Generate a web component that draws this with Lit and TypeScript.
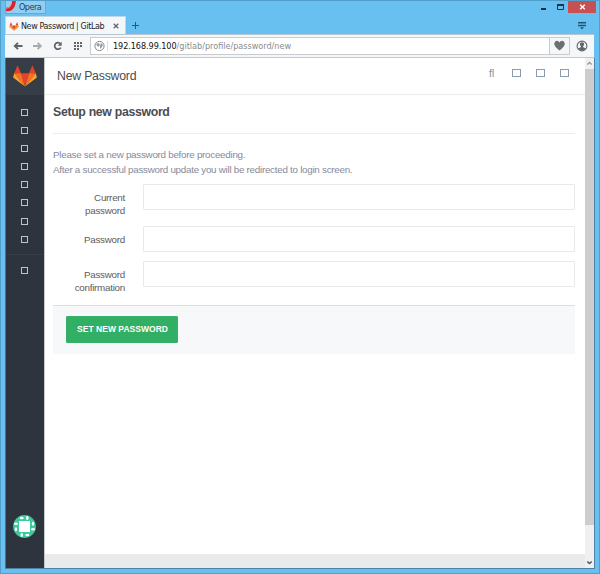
import { LitElement, html, css, svg } from "lit";
import { customElement } from "lit/decorators.js";

const fox = (w: number, h: number) => html`<svg width=${w} height=${h} viewBox="0 0 24 22" style="display:block">
  <path fill="#e24329" d="M4.6 0.2 8 8.3H1.2zM19.4 0.2 22.8 8.3H16z"/>
  <path fill="#e24329" d="M8 8.3h8L12 21.5z"/>
  <path fill="#fc6d26" d="M1.2 8.3H8l4 13.2zM22.8 8.3H16l-4 13.2z"/>
  <path fill="#fca326" d="M1.2 8.3 0.1 12.5 12 21.5zM22.8 8.3l1.1 4.2L12 21.5z"/>
</svg>`;

@customElement("browser-chrome")
class BrowserChrome extends LitElement {
  static styles = css`
    :host { display: block; font-family: "DejaVu Sans Condensed", "DejaVu Sans", sans-serif; color: #333; }
    svg { display: block; flex: none; }
    .title { height: 16px; display: flex; justify-content: space-between; box-sizing: border-box; border-top: 1px solid #4f9fca; padding: 0 4px 0 5px; }
    .opera { width: 41px; height: 13px; box-sizing: border-box; display: flex; gap: 2px; border: 1px solid #66a9cf; border-top: 0; background: #93cef0; overflow: hidden; }
    .opera span { font-size: 9px; line-height: 13px; letter-spacing: -0.5px; color: #1d3f57; }
    .controls { display: flex; height: 13px; }
    .close { width: 28px; height: 12px; background: #c75050; }
    .tabs { height: 18px; display: flex; padding-left: 5px; position: relative; }
    .tab { width: 121px; box-sizing: border-box; height: 18px; background: #f4f7fa; border: 1px solid #b9d8ea; border-bottom: 0; display: flex; align-items: center; padding: 1px 4px 0 3px; }
    .name { font-size: 8.900px; letter-spacing: -0.36px; white-space: nowrap; margin-left: 2px; width: 92px; color: #222; }
    .plus { margin: 6px 0 0 6px; }
    .menu { margin: 6px 14px 0 auto; }
    .bar { height: 24px; box-sizing: border-box; margin: 0 6px 0 5px; background: #f4f6f8; border-top: 1px solid #b7c6d0; border-bottom: 1px solid #c5c8cb; display: flex; align-items: center; }
    .nav { width: 85px; }
    .url { flex: 1; height: 18px; box-sizing: border-box; border: 1px solid #c9cbcd; background: #fff; display: flex; align-items: center; }
    .sep { width: 1px; height: 10px; background: #ddd; margin: 0 5px 0 1px; }
    .addr { font-size: 9px; color: #8b8b8b; white-space: nowrap; flex: 1; }
    .addr b { font-weight: 400; color: #111; letter-spacing: -0.06px; }
    .heart { width: 20px; height: 16px; box-sizing: border-box; border-left: 1px solid #c9cbcd; background: #f4f6f8; padding: 1px 0 0 4px; }
    .user { margin: 0 6px; }
  `;
  render() {
    return html`
      <div class="title">
        <div class="opera">
          <svg width="11" height="12" viewBox="0 0 11 12"><path d="M0 8Q7 10 8-1" fill="none" stroke="#d8232a" stroke-width="4"/><path d="M0 7Q5 8 6-1" fill="none" stroke="#f79a9b" stroke-width="1"/></svg>
          <span>Opera</span>
        </div>
        <div class="controls">
          <svg width="28" height="12" viewBox="0 0 28 12"><path d="M1 7h5v2H1z" fill="#1b2d38"/><path d="M17.500 4h6v4.500h-6z" fill="none" stroke="#1e3442"/><path d="M17 3h7v2h-7z" fill="#1e3442"/></svg>
          <svg class="close" viewBox="0 0 28 12"><path d="M12.200 3.700l4.600 4.600m0-4.600l-4.600 4.600" stroke="#fff" stroke-width="1.400"/></svg>
        </div>
      </div>
      <div class="tabs">
        <div class="tab">${fox(10, 9)}<span class="name">New Password | GitLab</span>
          <svg width="6" height="6" viewBox="0 0 6 6"><path d="M.7.7l4.600 4.600m0-4.600L.7 5.300" stroke="#666" stroke-width="1.300"/></svg>
        </div>
        <svg class="plus" width="7" height="7" viewBox="0 0 7 7"><path d="M3.500 0v7M0 3.500h7" stroke="#235a7c"/></svg>
        <svg class="menu" width="8" height="8" viewBox="0 0 8 8"><path d="M0 .8h8M0 3.500h8" stroke="#24536f" stroke-width="1.400"/><path d="M2 5.200h4l-2 2.200z" fill="#24536f"/></svg>
      </div>
      <div class="bar">
        <svg class="nav" width="85" height="22" viewBox="0 0 85 22">
          <path d="M17.500 11h-7.500M13 7.800 9.800 11l3.200 3.200" fill="none" stroke="#5f6367" stroke-width="1.900"/>
          <path d="M28 11h7.500M32.600 7.800l3.200 3.200-3.200 3.200" fill="none" stroke="#a8abae" stroke-width="1.900"/>
          <path d="M55.500 8.800a3.300 3.300 0 1 0 .3 3.800" fill="none" stroke="#5f6367" stroke-width="1.700"/><path d="M56.700 6.800v4h-4z" fill="#5f6367"/>
          ${[0, 1, 2].map((r) => [0, 1, 2].map((c) => (r === 2 && c === 2 ? "" : svg`<path fill="#606468" d=${`M${69 + c * 3} ${7 + r * 3}h2v2h-2z`}/>`)))}
        </svg>
        <div class="url">
          <svg width="13" height="12" viewBox="0 0 13 12" style="margin-left:2px"><circle cx="6.500" cy="6" r="4.600" fill="none" stroke="#85898c"/><path d="M3 4l3-1 1 2-2 2zM8 3l2 2-1 2-2 2V6z" fill="#999c9f"/></svg>
          <i class="sep"></i>
          <span class="addr"><b>192.168.99.100</b>/gitlab/profile/password/new</span>
          <svg class="heart" viewBox="0 0 15 15"><path d="M5.500 11.500Q0 7.500.200 4.500.600 1.800 3 1.800 4.800 1.800 5.500 3.500 6.200 1.800 8 1.800q2.400 0 2.800 2.700Q11 7.500 5.500 11.500z" fill="#6d7073"/></svg>
        </div>
        <svg class="user" width="12" height="12" viewBox="0 0 12 12"><circle cx="6" cy="6" r="4.900" fill="none" stroke="#626669" stroke-width="1.100"/><path d="M6 2.300c3 0 2.100 3.200 1 4.400 0 1 2.300.8 2.800 1.800Q6 12.500 2.200 8.500C2.700 7.500 5 7.700 5 6.700 3.900 5.500 3 2.300 6 2.300z" fill="#626669"/></svg>
      </div>`;
  }
}

@customElement("password-page")
class PasswordPage extends LitElement {
  static styles = css`
    :host { display: flex; height: 510px; background: #fff; font-family: "Liberation Sans", Arial, sans-serif; }
    .side { width: 38px; background: #2d343e; display: flex; flex-direction: column; align-items: flex-start; border-right: 1px solid #c5c9cc; flex: none; }
    .logo { width: 38px; height: 37px; box-sizing: border-box; background: #373d47; padding: 7px 0 0 7px; }
    .item { width: 7px; height: 7px; box-sizing: border-box; border: 1px solid #bcc3cb; margin: 0 0 11.100px 15px; }
    .items { padding-top: 14px; display: flex; flex-direction: column; }
    .line { width: 38px; height: 1px; background: #363d48; margin: 0 0 12px; }
    .avatar { margin: auto 0 30px 7px; display: block; }
    .main { flex: 1; min-width: 0; display: flex; flex-direction: column; }
    .head { height: 37px; box-sizing: border-box; border-bottom: 1px solid #ececee; display: flex; align-items: center; padding: 0 16px 0 12px; font-size: 12.300px; letter-spacing: -0.22px; color: #4c4c50; }
    .head .t { flex: 1; }
    .fl { font-size: 10.500px; color: #7f8fa4; width: 23px; margin-top: -6px; }
    .sq { width: 9px; height: 8px; box-sizing: border-box; border: 1px solid #8b9bb2; margin-left: 15px; margin-top: -7px; }
    .sq:nth-of-type(1) { margin-left: 0; }
    .body { padding: 0 10px 0 8px; flex: 1; }
    h3 { margin: 0; height: 39px; box-sizing: border-box; font-size: 12.300px; letter-spacing: -0.32px; line-height: 35px; color: #4c4c50; border-bottom: 1px solid #ececee; }
    p { margin: 13px 0 7px; font-size: 9.800px; letter-spacing: -0.26px; line-height: 15px; color: #858a9b; white-space: nowrap; }
    .row { display: flex; }
    label { width: 72px; margin-right: 18px; text-align: right; font-size: 9.800px; letter-spacing: -0.25px; line-height: 13px; padding-top: 7px; color: #5c5d5e; box-sizing: border-box; }
    .input { flex: 1; height: 26px; box-sizing: border-box; border: 1px solid #e7e9ed; border-radius: 1px; background: #fff; }
    .r1 { height: 42px; } .r2 { height: 35px; } .r3 { height: 44px; }
    .actions { height: 49px; box-sizing: border-box; background: #f7f8fa; border-top: 1px solid #dcdfe2; padding: 10px 0 0 13px; }
    button { display: block; width: 112px; height: 27px; padding: 0 0 1px 1px; border: 1px solid #3aaf69; border-radius: 1px; background: #31af64; color: #fff; font: bold 8.500px "Liberation Sans", Arial, sans-serif; letter-spacing: 0.030px; white-space: nowrap; }
    .foot { height: 14px; background: #e9eaeb; }
    .scroll { width: 9px; flex: none; background: #f0f0f0; display: flex; flex-direction: column; }
    .scroll svg { display: block; }
    .thumb { height: 456px; background: #cdcdcd; }
    .down { margin-top: auto; }
  `;
  render() {
    const quarters = [0, 90, 180, 270];
    return html`
      <div class="side">
        <div class="logo">${fox(24, 22)}</div>
        <div class="items">${Array.from({ length: 8 }, () => html`<i class="item"></i>`)}</div>
        <i class="line"></i><i class="item"></i>
        <svg class="avatar" width="23" height="23" viewBox="0 0 23 23">
          <circle cx="11.500" cy="11.500" r="11.400" fill="#3ec99c"/>
          <path fill="#fff" d="M6 6h11v11H6z"/>
          ${quarters.map((a) => svg`<g transform=${`rotate(${a} 11.5 11.5)`} fill="#fff"><ellipse cx="8.700" cy="3" rx="2" ry="1.200"/><ellipse cx="14.300" cy="3" rx="1.300" ry="2"/></g>`)}
        </svg>
      </div>
      <div class="main">
        <div class="head"><span class="t">New Password</span><span class="fl">ﬂ</span><i class="sq"></i><i class="sq"></i><i class="sq"></i></div>
        <div class="body">
          <h3>Setup new password</h3>
          <p>Please set a new password before proceeding.<br>After a successful password update you will be redirected to login screen.</p>
          <div class="row r1"><label>Current password</label><div class="input"></div></div>
          <div class="row r2"><label>Password</label><div class="input"></div></div>
          <div class="row r3"><label>Password confirmation</label><div class="input"></div></div>
          <div class="actions"><button>SET NEW PASSWORD</button></div>
        </div>
        <div class="foot"></div>
      </div>
      <div class="scroll">
        <svg width="9" height="11" viewBox="0 0 9 11"><path d="M2.300 6.500l2.200-2 2.200 2" fill="none" stroke="#999" stroke-width="1.400"/></svg>
        <div class="thumb"></div>
        <svg class="down" width="9" height="11" viewBox="0 0 9 11"><path d="M2.300 4.500l2.200 2 2.200-2" fill="none" stroke="#555" stroke-width="1.600"/></svg>
      </div>`;
  }
}

@customElement("app-root")
class AppRoot extends LitElement {
  static styles = css`
    :host { display: block; width: 600px; height: 574px; box-sizing: border-box; background: #68c0f0; box-shadow: inset 0 0 0 1px #519fca; overflow: hidden; }
    .page { margin: 0 5px; border: 1px solid #4b84a5; border-top: 0; border-left-color: #3f7592; }
  `;
  render() {
    return html`<browser-chrome></browser-chrome><div class="page"><password-page></password-page></div>`;
  }
}
